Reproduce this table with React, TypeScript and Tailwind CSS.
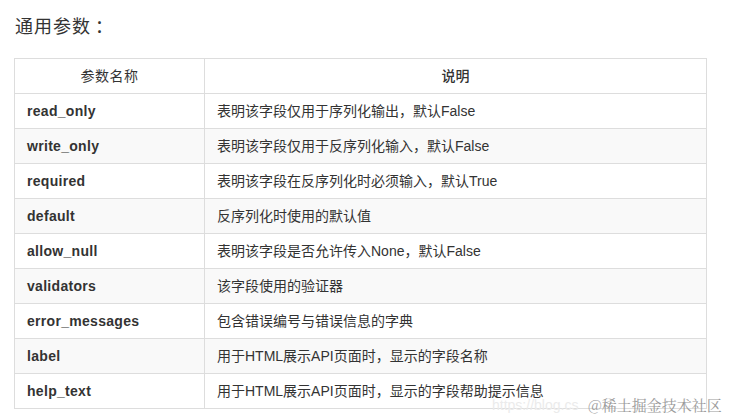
const rows = [
  { name: "read_only", desc: "表明该字段仅用于序列化输出，默认False" },
  { name: "write_only", desc: "表明该字段仅用于反序列化输入，默认False" },
  { name: "required", desc: "表明该字段在反序列化时必须输入，默认True" },
  { name: "default", desc: "反序列化时使用的默认值" },
  { name: "allow_null", desc: "表明该字段是否允许传入None，默认False" },
  { name: "validators", desc: "该字段使用的验证器" },
  { name: "error_messages", desc: "包含错误编号与错误信息的字典" },
  { name: "label", desc: "用于HTML展示API页面时，显示的字段名称" },
  { name: "help_text", desc: "用于HTML展示API页面时，显示的字段帮助提示信息" },
]

export default function App() {
  return (
    <div
      className="relative w-[729px] h-[419px] bg-white text-[#333] overflow-hidden"
      style={{ fontFamily: '"Liberation Sans", "Noto Sans CJK SC", sans-serif' }}
    >
      <div className="pl-[15px] pt-[15px] h-[58px] text-[18px] leading-[24px] tracking-[1px]">
        通用参数<span className="ml-[4px]">：</span>
      </div>
      <table className="ml-[14px] w-[693px] border-collapse text-[14px]">
        <thead>
          <tr className="h-[35px]">
            <th className="w-[190px] border border-[#dddddd] font-normal text-center tracking-[0.5px]">参数名称</th>
            <th className="border border-[#dddddd] font-medium text-center">说明</th>
          </tr>
        </thead>
        <tbody>
          {rows.map((r, i) => (
            <tr key={r.name} className={i % 2 === 1 ? "h-[35px] bg-[#f9f9f9]" : "h-[35px] bg-white"}>
              <td className="border border-[#dddddd] px-[12px] font-bold tracking-[0.3px]">{r.name}</td>
              <td className="border border-[#dddddd] px-[12px]">{r.desc}</td>
            </tr>
          ))}
        </tbody>
      </table>
      <div className="absolute left-[492px] top-[396px] text-[14px] leading-[18px] text-[#ebebeb] whitespace-nowrap">
        https://blog.cs
      </div>
      <div
        className="absolute left-[588px] top-[395px] text-[15px] leading-[20px] text-[#9a9a9a] whitespace-nowrap"
        style={{ fontFamily: '"Noto Serif CJK SC", "Noto Sans CJK SC", serif' }}
      >
        @稀土掘金技术社区
      </div>
    </div>
  )
}
